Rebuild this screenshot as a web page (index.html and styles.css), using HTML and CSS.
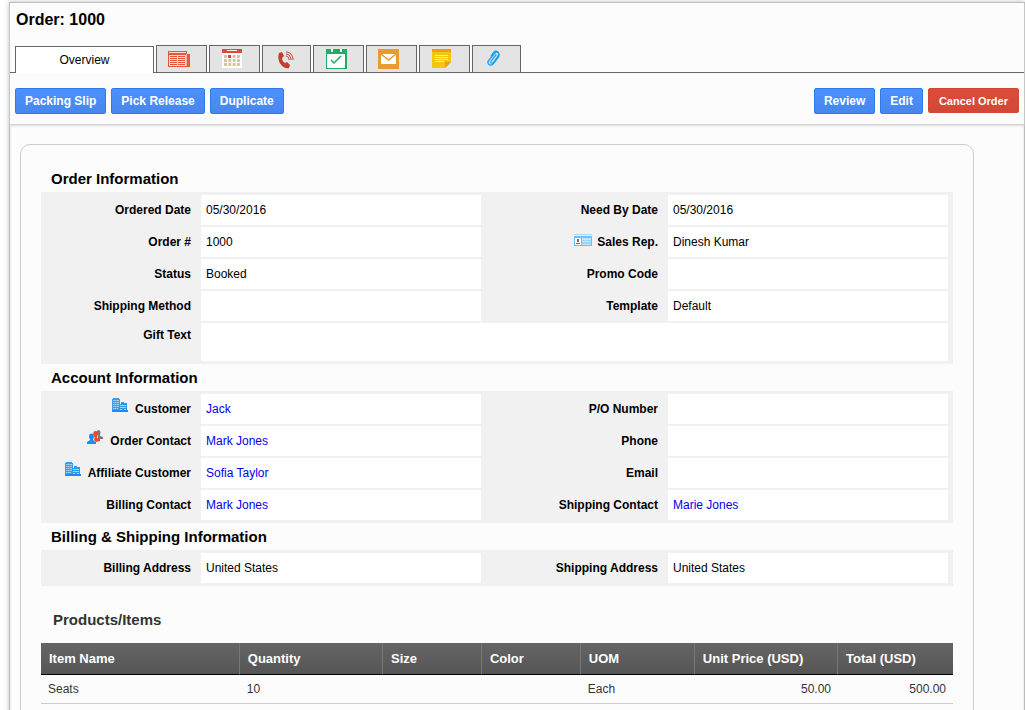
FILE: index.html
```html
<!DOCTYPE html>
<html lang="en">
<head>
<meta charset="utf-8">
<title>Order: 1000</title>
<link rel="stylesheet" href="styles.css">
</head>
<body>
<svg class="sprite" aria-hidden="true">
  <symbol id="building" viewBox="0 0 16 14">
    <path fill="#3b9cec" d="M0 1h1V0h6v1h1v12H0z"/>
    <path fill="#a3d2f7" d="M1 2h6v1H1zM1 4h6v1H1zM1 6h6v1H1zM1 8h6v1H1zM1 10h5v1H1z"/>
    <path stroke="#3b9cec" d="M2.500 1v11M4.500 1v11" stroke-width=".4"/>
    <path fill="#2f98ee" d="M9 4h3v1h3v8H7V6h2z"/>
    <path fill="#a3d2f7" d="M8 7h6v1H8zM8 9h6v1H8zM8 11h2v1H8zM12 11h2v1h-2z"/>
    <path fill="#1a8df0" d="M0 12h16v2H0z"/>
  </symbol>
</svg>
<div class="page">
  <header class="top">
    <h1>Order: 1000</h1>
    <nav class="tabs">
      <button class="tab active">Overview</button>
      <button class="tab" aria-label="News"><svg viewBox="0 0 22 22"><path fill="#e8573a" d="M0 4h19v3h3v13H0z"/><path fill="#f6dcd4" d="M1 5h17v1H1zM1 8h17v11H1z"/><path fill="#f3b5a5" d="M18 7h1v12h-1z"/><path stroke="#e8573a" d="M2 9.500h7M10 9.500h7M2 11.500h7M10 11.500h7M2 13.500h7M10 13.500h7M2 15.500h7M10 15.500h7M2 17.500h7M10 17.500h7"/></svg></button>
      <button class="tab" aria-label="Calendar"><svg viewBox="0 0 22 22"><path fill="#fff" d="M1 3h20v18H1z"/><path fill="#e2453b" d="M1 2h20v4H1z"/><path fill="#fff" d="M6 3h10v1H6z"/><path stroke="#d3c69b" stroke-width="3" stroke-dasharray="3 1.300" d="M3 9.500h16.500M3 13.500h16.500M3 17.500h16.500"/><path fill="#e2453b" d="M7 8h3v3H7z"/></svg></button>
      <button class="tab narrow" aria-label="Calls"><svg viewBox="0 0 22 22"><path fill="#c1402b" d="M5 6l3-1 2 4-2 2c0 2 1 4 3 5l2-1 3 3-1 3c-6 2-13-7-10-15z"/><path fill="none" stroke="#c1402b" d="M12 9c2 0 3 2 3 4M12 7c3 0 5 3 5 6M12 5c4 0 7 3 7 8"/></svg></button>
      <button class="tab" aria-label="Tasks"><svg viewBox="0 0 22 22"><path fill="#22ab62" d="M1 2h21v20H1z"/><path fill="#fff" d="M2 7h18v14H2zM6 2h2v3H6zM15 2h2v3h-2z"/><path fill="none" stroke="#22ab62" stroke-width="1.500" d="M6 13l3 3 7-7"/></svg></button>
      <button class="tab" aria-label="Emails"><svg viewBox="0 0 22 22"><path fill="#e99a30" d="M0 2h21v20H0z"/><path fill="#fff" d="M3 7h15v10H3z"/><path fill="none" stroke="#e99a30" stroke-width="1.500" d="M3 7l7.500 6 7.500-6"/></svg></button>
      <button class="tab" aria-label="Notes"><svg viewBox="0 0 22 22"><path fill="#f4c60f" d="M1 2h19v13l-6 6H1z"/><path fill="#f29b13" d="M1 2h19v3H1zM14 15h6l-6 6z"/><path stroke="#fbecab" d="M4 8.500h13M4 10.500h13M4 12.500h13M4 14.500h9"/></svg></button>
      <button class="tab narrow" aria-label="Attachments"><svg viewBox="0 0 22 22"><path fill="none" stroke="#1e9cf0" stroke-width="1.200" stroke-linecap="round" d="M12 8l-5 6c-1 2 1 3 2 2l5-7c2-3-1-5-3-3l-6 7c-3 3 1 7 4 4l5-6c3-4-1-9-4-6l-3 4"/></svg></button>
    </nav>
    <div class="toolbar">
      <button class="btn">Packing Slip</button>
      <button class="btn">Pick Release</button>
      <button class="btn">Duplicate</button>
      <span class="spacer"></span>
      <button class="btn">Review</button>
      <button class="btn">Edit</button>
      <button class="btn danger">Cancel Order</button>
    </div>
  </header>
  <main class="card">
    <h2>Order Information</h2>
    <dl class="fields">
      <dt>Ordered Date</dt><dd>05/30/2016</dd><dt>Need By Date</dt><dd>05/30/2016</dd>
      <dt>Order #</dt><dd>1000</dd>
      <dt><svg class="id-icon" viewBox="0 0 18 12"><path fill="#a9daf8" d="M0 0h18v2H0z"/><path fill="#e3f4fe" d="M0 1h18v1H0z"/><path fill="#72bff5" d="M0 2h18v10H0z"/><path fill="#c4e6fd" d="M8 4h9v7H8z"/><path fill="#9ad5fb" d="M8 6h9v1H8zM8 8h9v2H8z"/><path fill="#fff" d="M1 4h6v7H1z"/><path fill="#a75b55" d="M3 5h2v3H3zM2 9h4v1H2z"/></svg>Sales Rep.</dt><dd>Dinesh Kumar</dd>
      <dt>Status</dt><dd>Booked</dd><dt>Promo Code</dt><dd></dd>
      <dt>Shipping Method</dt><dd></dd><dt>Template</dt><dd>Default</dd>
      <dt class="tall">Gift Text</dt><dd class="wide"></dd>
    </dl>
    <h2>Account Information</h2>
    <dl class="fields">
      <dt><svg class="row-icon"><use href="#building"/></svg>Customer</dt><dd><a href="#">Jack</a></dd><dt>P/O Number</dt><dd></dd>
      <dt><svg class="row-icon" viewBox="0 0 16 14"><ellipse cx="11.500" cy="2.500" rx="2" ry="2.500" fill="#777"/><path fill="#777" d="M11 4h2v2l3 1v2h-5z"/><ellipse cx="8.500" cy="4" rx="2.300" ry="3" fill="#ef4a28"/><path fill="#ef4a28" d="M8 6h2v2l3 1v2l-4 1-2-2z"/><ellipse cx="4.500" cy="6.500" rx="2.500" ry="3" fill="#1f8fee"/><path fill="#1f8fee" d="M3 8h3v2l3 2v2H0v-2l3-2z"/></svg>Order Contact</dt><dd><a href="#">Mark Jones</a></dd><dt>Phone</dt><dd></dd>
      <dt><svg class="row-icon"><use href="#building"/></svg>Affiliate Customer</dt><dd><a href="#">Sofia Taylor</a></dd><dt>Email</dt><dd></dd>
      <dt>Billing Contact</dt><dd><a href="#">Mark Jones</a></dd><dt>Shipping Contact</dt><dd><a href="#">Marie Jones</a></dd>
    </dl>
    <h2>Billing &amp; Shipping Information</h2>
    <dl class="fields">
      <dt>Billing Address</dt><dd>United States</dd><dt>Shipping Address</dt><dd>United States</dd>
    </dl>
    <h2 class="items-title">Products/Items</h2>
    <table class="items">
      <colgroup><col class="c-name"><col class="c-mid"><col class="c-small"><col class="c-small"><col class="c-unit"><col class="c-mid"><col></colgroup>
      <thead><tr><th>Item Name</th><th>Quantity</th><th>Size</th><th>Color</th><th>UOM</th><th>Unit Price (USD)</th><th>Total (USD)</th></tr></thead>
      <tbody><tr><td>Seats</td><td>10</td><td></td><td></td><td>Each</td><td class="num">50.00</td><td class="num">500.00</td></tr></tbody>
    </table>
  </main>
</div>
</body>
</html>
```
FILE: styles.css
```css
* { box-sizing: border-box; }
html { background: #fff; }
body {
  height: 100vh;
  margin: 0;
  padding: 2px 0 0 9px;
  overflow: hidden auto;
  scrollbar-width: none;
  font: 12px/18px "Liberation Sans", Arial, sans-serif;
  color: #000;
}
button { font-family: inherit; cursor: pointer; margin: 0; }
.sprite { display: none; }
.page {
  min-height: calc(100vh - 2px);
  border: 1px solid #bbb;
  border-bottom: 0;
  background: #fcfcfc;
  box-shadow: 0 0 5px #bbb, inset 0 0 3px #ddd;
}
.top {
  background: #fcfcfc;
  border-bottom: 1px solid #d4d4d4;
  box-shadow: 0 1px 2px #ddd;
}
h1 { margin: 0; padding: 6px 6px 0; font-size: 16px; line-height: 22px; }
.tabs {
  display: flex;
  align-items: flex-end;
  gap: 2px;
  height: 42px;
  padding-left: 5px;
  border-bottom: 1px solid #666;
}
.tab {
  width: 51px;
  height: 27px;
  padding: 0 0 2px 11px;
  border: 1px solid #666;
  border-bottom: 0;
  background: #e4e4e4;
  text-align: left;
}
.tab.narrow { width: 49px; }
.tab.active {
  width: 139px;
  padding: 0;
  background: #fff;
  font-size: 12px;
  text-align: center;
  margin-bottom: -1px;
}
.tab svg { display: block; width: 22px; height: 22px; }
.toolbar { display: flex; align-items: flex-start; gap: 5px; padding: 15px 5px 10px; }
.spacer { flex: 1; }
.btn {
  height: 26px;
  padding: 0 9px;
  border: 1px solid #3079ed;
  border-radius: 2px;
  background: linear-gradient(#4d90fe, #4787ed);
  color: #fff;
  font-size: 12px;
  font-weight: bold;
}
.btn.danger {
  height: 25px;
  padding: 0 10px;
  border-color: #d14836;
  background: linear-gradient(#dd4b39, #d14836);
  font-size: 11px;
}
.card {
  margin: 19px 50px 0 10px;
  padding: 20px;
  border: 1px solid #ccc;
  border-radius: 10px;
}
h2 { margin: 0; padding-left: 10px; font-size: 15px; line-height: 27px; }
.fields {
  display: grid;
  grid-template-columns: 160px 1fr 187px 1fr;
  grid-auto-rows: minmax(30px, auto);
  gap: 2px 0;
  margin: 0;
  padding: 3px 5px 3px 0;
  background: #f1f1f1;
}
dt {
  display: flex;
  justify-content: flex-end;
  align-items: flex-start;
  padding: 6px 10px 6px 0;
  font-weight: bold;
}
dd { margin: 0; padding: 6px 5px; background: #fff; }
dt.tall { padding-top: 3px; }
dd.wide { grid-column: 2 / -1; min-height: 38px; }
a { color: #00e; text-decoration: none; }
.row-icon { width: 16px; height: 14px; margin: -2px 7px 0 0; }
.id-icon { width: 18px; height: 12px; margin: 1px 5px 0 0; }
.items-title { padding: 20px 12px 10px; color: #333; }
.items { width: 100%; border-collapse: separate; border-spacing: 0; table-layout: fixed; }
.c-name { width: 21.800%; }
.c-mid { width: 15.700%; }
.c-small { width: 10.850%; }
.c-unit { width: 12.500%; }
th {
  height: 32px;
  padding: 0 8px;
  border-right: 1px solid #777;
  border-bottom: 1px solid #000;
  background: linear-gradient(#656565, #555);
  color: #fff;
  font-size: 13px;
  text-align: left;
}
th:last-child { border-right: 0; }
td { height: 29px; padding: 0 7px; border-bottom: 1px solid #ccc; color: #333; }
.num { text-align: right; }
```
